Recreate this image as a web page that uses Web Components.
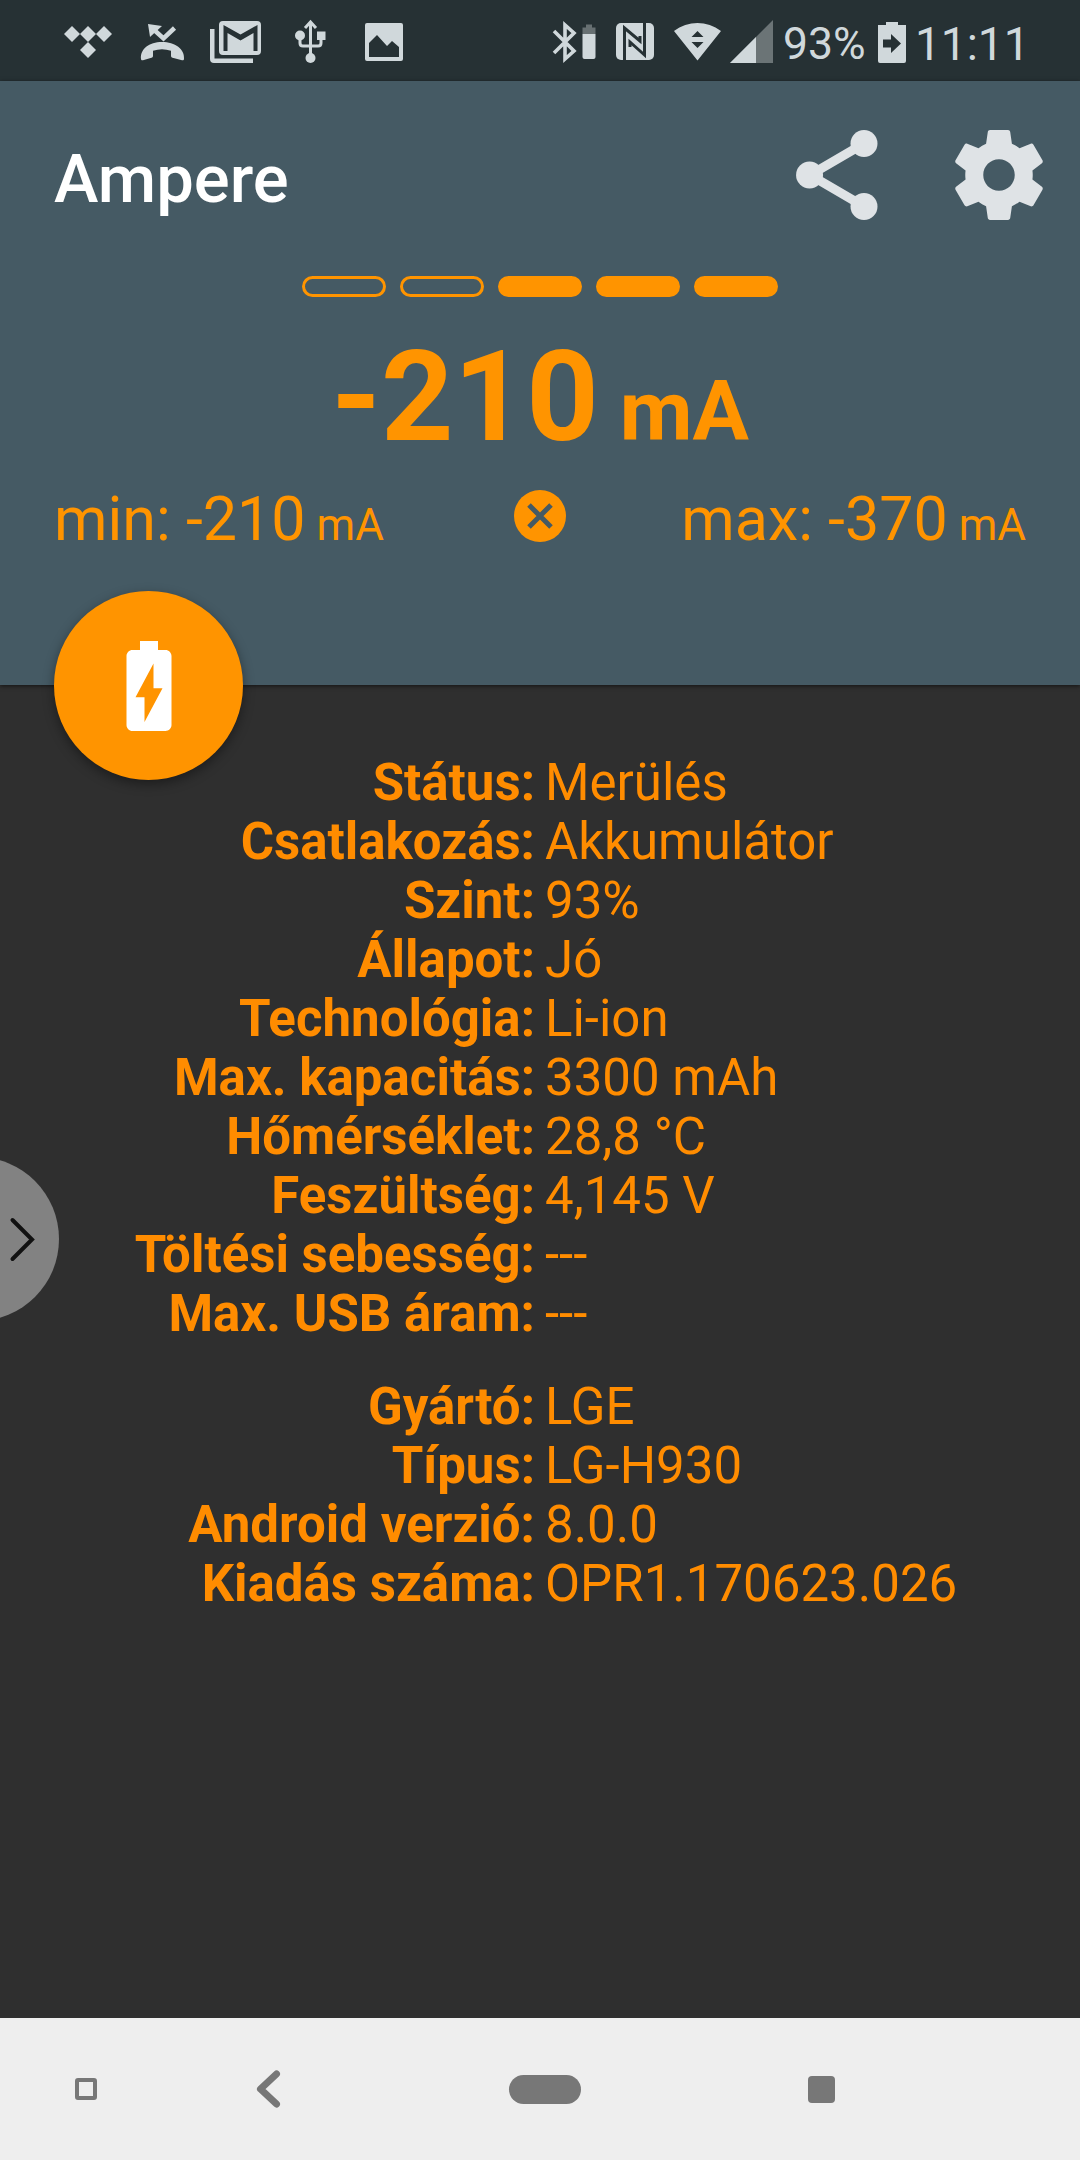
<!DOCTYPE html>
<html lang="hu">
<head>
<meta charset="utf-8">
<title>Ampere</title>
<style>
    body {
        margin: 0;
        background: #2f2f2f;
        font-family: Roboto, "Noto Sans", sans-serif;
    }
</style>
</head>
<body>
<ampere-app></ampere-app>

<script>
// Attaches an open shadow root filled with the given markup.
function render(el, html) {
    const template = document.createElement("template");
    template.innerHTML = html;
    el.attachShadow({ mode: "open" }).appendChild(template.content.cloneNode(true));
}

const icons = {
    tidal: `<path d="M8 0l8 8 8-8 8 8 8-8 8 8-8 8-8-8-8 8 8 8-8 8-8-8 8-8-8-8-8 8-8-8z"/>`,
    missed: `<path d="M8 1l14 2-12 11z"/><path fill="none" stroke="currentColor" stroke-width="4.500" d="M12 5l11.500 10.500L34.500 5"/>
        <path d="M1 36c-1-10 8-17 21-17s23 7 22 17c0 1-1 1.500-2 1.200l-9.500-2.500c-1-.3-1.500-1-1.500-2v-5c-6-2-12-2-18 0v5c0 1-.5 1.700-1.500 2L3 37.200c-1 .3-2-.2-2-1.200z"/>`,
    gmail: `<path d="M0 8h4.500v29.500H43V42H4a4 4 0 0 1-4-4z"/>
        <path fill-rule="evenodd" d="M13 0h34a4 4 0 0 1 4 4v26a4 4 0 0 1-4 4H13a4 4 0 0 1-4-4V4a4 4 0 0 1 4-4zm.5 4v26h4V12l13 7.500L43.500 12v18h4V4L30.500 13.500z"/>`,
    usb: `<g fill="none" stroke="currentColor" stroke-width="3"><path d="M15.500 2v36M10 8l5.500-6L21 8M5 16v7q0 3 3 3h15q3 0 3-3v-7"/></g>
        <circle cx="5" cy="15.500" r="5"/><path d="M22 11.500h8.500v8.500H22z"/><circle cx="15.500" cy="38" r="5"/>`,
    image: `<path fill-rule="evenodd" d="M2 0h34a2 2 0 0 1 2 2v34a2 2 0 0 1-2 2H2a2 2 0 0 1-2-2V2a2 2 0 0 1 2-2zm2 20v14h30V24l-7-6-5 5L12 12z"/>`,
    bluetooth: `<path fill="none" stroke="currentColor" stroke-width="3.600" d="M1 8l20 20-9 8V2l9 8L1 30"/>
        <path d="M29.500 11h13v23a2 2 0 0 1-2 2h-9a2 2 0 0 1-2-2z"/>
        <path fill="#677072" d="M29.500 4.500H33V1.500h6v3h3.500V11h-13z"/>`,
    nfc: `<rect width="38" height="37" rx="5"/>
        <g fill="none" stroke="#263134" stroke-width="3"><path d="M8.500 37V5L24 18v-5"/><path d="M28.500 0v32L14 19v5"/></g>`,
    wifi: `<path fill-rule="evenodd" d="M0 8C14-2.700 33-2.700 47 8L23.500 37.500zM17.500 14h12l-6-6zm0 5h12l-6 6z"/>`,
    signal: `<path fill="#6b7476" d="M43 0v43H0z"/><path d="M26 17v26H0z"/>`,
    battery: `<path fill-rule="evenodd" d="M8 1h12v3h8v36a2 2 0 0 1-2 2H2a2 2 0 0 1-2-2V4h8zM5 18.500v8h8V32l10-9.500L13 13v5.500z"/>`,
    share: `<path fill="none" stroke="currentColor" stroke-width="2" d="M18 5L6 12l12 7"/>
        <circle cx="18" cy="5" r="3"/><circle cx="5.900" cy="12" r="3"/><circle cx="18" cy="19" r="3"/>`,
    gear: `<path d="M19.430 12.980c.04-.32.07-.64.07-.98s-.03-.66-.07-.98l2.110-1.650c.19-.15.24-.42.12-.64l-2-3.460c-.12-.22-.39-.3-.61-.22l-2.490 1c-.52-.4-1.080-.73-1.690-.98l-.38-2.650C14.460 2.180 14.250 2 14 2h-4c-.25 0-.46.18-.49.42l-.38 2.650c-.61.25-1.170.59-1.690.98l-2.490-1c-.23-.09-.49 0-.61.22l-2 3.460c-.13.22-.07.49.12.64l2.110 1.650c-.04.32-.07.65-.07.98s.03.66.07.98l-2.110 1.650c-.19.15-.24.42-.12.64l2 3.460c.12.22.39.3.61.22l2.490-1c.52.4 1.080.73 1.690.98l.38 2.650c.03.24.24.42.49.42h4c.25 0 .46-.18.49-.42l.38-2.650c.61-.25 1.170-.59 1.690-.98l2.490 1c.23.09.49 0 .61-.22l2-3.460c.12-.22.07-.49-.12-.64l-2.110-1.650zM12 15.500c-1.930 0-3.500-1.570-3.500-3.500s1.570-3.500 3.500-3.500 3.500 1.570 3.500 3.500-1.570 3.500-3.500 3.500z"/>`,
    charging: `<path d="M15.670 4H14V2h-4v2H8.330C7.600 4 7 4.600 7 5.330v15.330C7 21.400 7.600 22 8.330 22h7.330c.74 0 1.340-.6 1.340-1.330V5.330C17 4.600 16.400 4 15.670 4zM11 20v-5.500H9L13 7v5.500h2L11 20z"/>`,
    reset: `<circle cx="26" cy="26" r="26"/><path stroke="#455a64" stroke-width="5" d="M15 15l22 22m0-22l-22 22"/>`,
    chevron: `<path fill="none" stroke="currentColor" stroke-width="4" stroke-linecap="round" d="M2.500 2L22 21.500 2.500 41"/>`,
    back: `<path fill="none" stroke="currentColor" stroke-width="7" stroke-linecap="round" stroke-linejoin="round" d="M20.500 4L4.500 19l16 15"/>`
};

// <app-icon name w h box>: box is the viewBox size when it is not w x h.
class AppIcon extends HTMLElement {
    connectedCallback() {
        const w = this.getAttribute("w");
        const h = this.getAttribute("h");
        const box = this.getAttribute("box") || `${w} ${h}`;
        render(this, `
<style>
    :host { display: block; flex: none; width: ${w}px; height: ${h}px; }
    svg { display: block; overflow: visible; }
</style>
<svg width="${w}" height="${h}" viewBox="0 0 ${box}" fill="currentColor">${icons[this.getAttribute("name")]}</svg>`);
    }
}

class StatusBar extends HTMLElement {
    constructor() {
        super();
        render(this, `
<style>
    :host {
        display: flex;
        align-items: center;
        height: 81px;
        padding: 2px 51px 0 64px;
        box-sizing: border-box;
        background: #263134;
        color: #d0d8db;
        font-size: 46px;
        line-height: 54px;
    }
    .left, .right { display: flex; align-items: center; }
    .left { gap: 28px; }
    .right { margin-left: auto; }
    .level { margin: 4px 13px 0 10px; width: 82px; white-space: nowrap; font-size: 44.500px; }
    .time { margin: 4px 0 0 9px; width: 114px; white-space: nowrap; }
</style>
<div class="left">
    <app-icon name="tidal" w="48" h="32"></app-icon>
    <app-icon name="missed" w="44" h="38"></app-icon>
    <app-icon name="gmail" w="51" h="42" style="margin-left:-2px"></app-icon>
    <app-icon name="usb" w="31" h="43" style="margin-left:6px"></app-icon>
    <app-icon name="image" w="38" h="38" style="margin-left:11px"></app-icon>
</div>
<div class="right">
    <app-icon name="bluetooth" w="43" h="38"></app-icon>
    <app-icon name="nfc" w="38" h="37" style="margin-left:20px"></app-icon>
    <app-icon name="wifi" w="47" h="37" style="margin-left:20px"></app-icon>
    <app-icon name="signal" w="43" h="43" style="margin-left:9px"></app-icon>
    <span class="level">93%</span>
    <app-icon name="battery" w="28" h="42"></app-icon>
    <span class="time">11:11</span>
</div>`);
    }
}

class LevelBars extends HTMLElement {
    connectedCallback() {
        const total = Number(this.getAttribute("total"));
        const empty = Number(this.getAttribute("empty"));
        let bars = "";
        for (let i = 0; i < total; i++) {
            bars += `<i class="${i < empty ? "" : "on"}"></i>`;
        }
        render(this, `
<style>
    :host { display: flex; justify-content: center; gap: 14px; }
    i { box-sizing: border-box; width: 84px; height: 21px; border: 3px solid currentColor; border-radius: 11px; }
    .on { background: currentColor; }
</style>${bars}`);
    }
}

class AmpereHeader extends HTMLElement {
    constructor() {
        super();
        render(this, `
<style>
    :host {
        display: flex;
        flex-direction: column;
        position: relative;
        box-sizing: border-box;
        height: 604px;
        background: #455a64;
        color: #ff9400;
        box-shadow: 0 1px 4px rgba(0, 0, 0, .6);
        white-space: nowrap;
    }
    .bar {
        display: flex;
        align-items: center;
        height: 108px;
        padding: 40px 27px 0 54px;
        color: #dfe3e6;
    }
    h1 { margin: 7px auto 0 0; color: #fff; font-size: 67px; font-weight: 500; line-height: 74px; }
    app-icon + app-icon { margin-left: 54px; }
    level-bars { margin-top: 47px; }
    .now { margin-top: 25px; text-align: center; font-size: 126.500px; font-weight: 700; line-height: 151px; }
    .now small { font-size: 84px; }
    .range {
        display: grid;
        grid-template-columns: 1fr 52px 1fr;
        align-items: center;
        margin-top: -3px;
        padding: 0 54px;
        font-size: 61px;
        line-height: 70px;
    }
    .range small { font-size: 44px; }
    .range app-icon { margin-top: -12px; }
    .max { text-align: right; }
    .fab {
        position: absolute;
        left: 54px;
        bottom: -95px;
        display: flex;
        align-items: center;
        justify-content: center;
        width: 189px;
        height: 189px;
        border-radius: 50%;
        background: #ff9400;
        color: #fff;
        box-shadow: 0 4px 12px rgba(0, 0, 0, .4);
    }
</style>
<div class="bar">
    <h1>Ampere</h1>
    <app-icon name="share" w="108" h="108" box="24 24"></app-icon>
    <app-icon name="gear" w="108" h="108" box="24 24"></app-icon>
</div>
<level-bars total="5" empty="2"></level-bars>
<div class="now">-210<small> mA</small></div>
<div class="range">
    <span>min: -210<small> mA</small></span>
    <app-icon name="reset" w="52" h="52"></app-icon>
    <span class="max">max: -370<small> mA</small></span>
</div>
<div class="fab"><app-icon name="charging" w="108" h="108" box="24 24"></app-icon></div>`);
    }
}

class InfoRow extends HTMLElement {
    connectedCallback() {
        render(this, `
<style>
    :host { display: grid; grid-template-columns: 535px 1fr; column-gap: 10px; height: 59px; line-height: 59px; white-space: nowrap; }
    b { text-align: right; font-weight: 700; }
</style>
<b>${this.getAttribute("label")}:</b><span><slot></slot></span>`);
    }
}

class InfoList extends HTMLElement {
    constructor() {
        super();
        render(this, `
<style>
    :host { display: block; color: #ff8c00; font-size: 51px; }
    :host(:not(:first-of-type)) { margin-top: 34px; }
</style>
<slot></slot>`);
    }
}

class EdgeHandle extends HTMLElement {
    constructor() {
        super();
        render(this, `
<style>
    :host {
        position: absolute;
        left: -105px;
        top: 1157px;
        display: flex;
        align-items: center;
        justify-content: flex-end;
        box-sizing: border-box;
        width: 164px;
        height: 164px;
        padding-right: 25px;
        border-radius: 50%;
        background: #828282;
        color: #111;
    }
</style>
<app-icon name="chevron" w="24" h="43"></app-icon>`);
    }
}

class NavBar extends HTMLElement {
    constructor() {
        super();
        render(this, `
<style>
    :host {
        display: flex;
        align-items: center;
        box-sizing: border-box;
        height: 142px;
        padding-left: 75px;
        background: #eee;
        color: #777;
    }
    i { box-sizing: border-box; flex: none; }
    .dot { width: 22px; height: 22px; border: 4px solid; border-radius: 3px; }
    app-icon { margin-left: 159px; }
    .home { width: 72px; height: 29px; margin-left: 229px; border-radius: 15px; background: currentColor; }
    .recent { width: 27px; height: 27px; margin-left: 227px; border-radius: 4px; background: currentColor; }
</style>
<i class="dot"></i>
<app-icon name="back" w="24" h="38"></app-icon>
<i class="home"></i>
<i class="recent"></i>`);
    }
}

class AmpereApp extends HTMLElement {
    constructor() {
        super();
        render(this, `
<style>
    :host {
        display: flex;
        flex-direction: column;
        position: relative;
        width: 1080px;
        height: 2160px;
        overflow: hidden;
        background: #2f2f2f;
    }
    main { flex: 1; padding-top: 68px; }
</style>
<status-bar></status-bar>
<ampere-header></ampere-header>
<main>
    <info-list>
        <info-row label="Státus">Merülés</info-row>
        <info-row label="Csatlakozás">Akkumulátor</info-row>
        <info-row label="Szint">93%</info-row>
        <info-row label="Állapot">Jó</info-row>
        <info-row label="Technológia">Li-ion</info-row>
        <info-row label="Max. kapacitás">3300 mAh</info-row>
        <info-row label="Hőmérséklet">28,8 °C</info-row>
        <info-row label="Feszültség">4,145 V</info-row>
        <info-row label="Töltési sebesség">---</info-row>
        <info-row label="Max. USB áram">---</info-row>
    </info-list>
    <info-list>
        <info-row label="Gyártó">LGE</info-row>
        <info-row label="Típus">LG-H930</info-row>
        <info-row label="Android verzió">8.0.0</info-row>
        <info-row label="Kiadás száma">OPR1.170623.026</info-row>
    </info-list>
</main>
<nav-bar></nav-bar>
<edge-handle></edge-handle>`);
    }
}

customElements.define("app-icon", AppIcon);
customElements.define("level-bars", LevelBars);
customElements.define("info-row", InfoRow);
customElements.define("info-list", InfoList);
customElements.define("status-bar", StatusBar);
customElements.define("ampere-header", AmpereHeader);
customElements.define("edge-handle", EdgeHandle);
customElements.define("nav-bar", NavBar);
customElements.define("ampere-app", AmpereApp);
</script>
</body>
</html>
